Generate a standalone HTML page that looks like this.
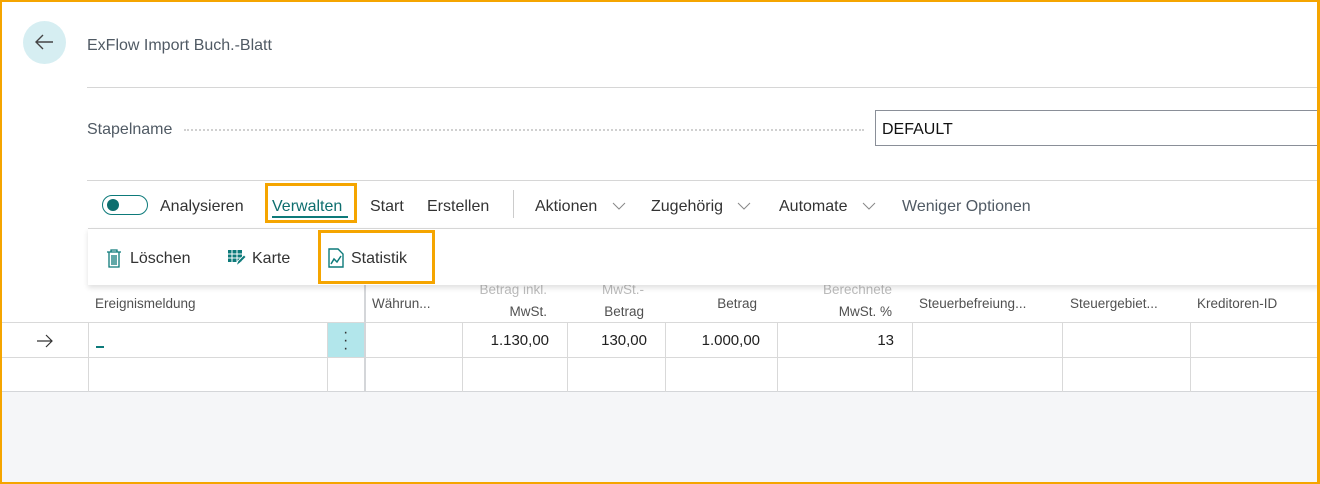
<!DOCTYPE html>
<html><head><meta charset="utf-8"><style>
*{margin:0;padding:0;box-sizing:border-box}
body{width:1320px;height:484px;overflow:hidden;background:#fff;font-family:"Liberation Sans",sans-serif;position:relative;color:#212121}
.a{position:absolute;white-space:nowrap}
.t{font-size:16px;color:#333}
.h{font-size:13.5px;color:#505050}
.v{font-size:15px;color:#212121}
.vl{position:absolute;width:1px;background:#d9d9d9}
.cv{position:absolute}
</style></head><body>
<div class="a" style="left:0;top:392px;width:1320px;height:92px;background:#f5f6f8"></div>
<div class="a" style="left:23px;top:21px;width:43px;height:43px;border-radius:50%;background:#d6eef2"></div>
<svg class="a" style="left:33px;top:32px" width="22" height="20" viewBox="0 0 22 20"><path d="M20 10H3M10 3L3 10l7 7" fill="none" stroke="#444" stroke-width="1.4"/></svg>
<div class="a" style="left:87px;top:37px;font-size:16px;color:#505a64">ExFlow Import Buch.-Blatt</div>
<div class="a" style="left:87px;top:87px;width:1233px;height:1px;background:#d6d6d6"></div>
<div class="a" style="left:87px;top:121px;font-size:16px;color:#505a64">Stapelname</div>
<div class="a" style="left:184px;top:129px;width:680px;border-top:2px dotted #d0d0d0"></div>
<div class="a" style="left:875px;top:110px;width:450px;height:36px;border:1px solid #8a8f98"></div>
<div class="a" style="left:882px;top:121px;font-size:16px;color:#111">DEFAULT</div>
<div class="a" style="left:87px;top:180px;width:1233px;height:1px;background:#d6d6d6"></div>
<!-- toolbar -->
<div class="a" style="left:102px;top:195px;width:46px;height:20px;border:1.5px solid #0d7a7a;border-radius:10px"></div>
<div class="a" style="left:107px;top:199px;width:12px;height:12px;border-radius:50%;background:#0d6e6e"></div>
<div class="a t" style="left:160px;top:198px">Analysieren</div>
<div class="a t" style="left:272px;top:198px;color:#0d6e6e">Verwalten</div>
<div class="a" style="left:272px;top:216px;width:76px;height:2px;background:#0d7a7a"></div>
<div class="a" style="left:265px;top:183px;width:92px;height:40px;border:3px solid #f5a500"></div>
<div class="a t" style="left:370px;top:198px">Start</div>
<div class="a t" style="left:427px;top:198px">Erstellen</div>
<div class="a" style="left:513px;top:190px;width:1px;height:28px;background:#ccc"></div>
<div class="a t" style="left:535px;top:198px">Aktionen</div>
<svg class="cv" style="left:612px;top:202px" width="14" height="8" viewBox="0 0 14 8"><path d="M1 1l6 6 6-6" fill="none" stroke="#888" stroke-width="1"/></svg>
<div class="a t" style="left:651px;top:198px">Zugehörig</div>
<svg class="cv" style="left:737px;top:202px" width="14" height="8" viewBox="0 0 14 8"><path d="M1 1l6 6 6-6" fill="none" stroke="#888" stroke-width="1"/></svg>
<div class="a t" style="left:779px;top:198px">Automate</div>
<svg class="cv" style="left:862px;top:202px" width="14" height="8" viewBox="0 0 14 8"><path d="M1 1l6 6 6-6" fill="none" stroke="#888" stroke-width="1"/></svg>
<div class="a t" style="left:902px;top:198px;color:#505a64">Weniger Optionen</div>
<!-- popup -->
<div class="a" style="left:88px;top:228px;width:1232px;height:57px;background:#fff;border-top:1px solid #d6d6d6;box-shadow:0 3px 5px rgba(0,0,0,0.12);z-index:2"></div>
<svg class="a" style="left:106px;top:249px;z-index:3" width="16" height="20" viewBox="0 0 16 20"><path d="M1 3h14M5 3V1h6v2M3 3v15h10V3M6 6v10M8 6v10M10 6v10" fill="none" stroke="#0d7a7a" stroke-width="1.3"/></svg>
<div class="a t" style="left:130px;top:250px;z-index:3">Löschen</div>
<svg class="a" style="left:227px;top:249px;z-index:3" width="20" height="19" viewBox="0 0 20 19"><rect x="1" y="1" width="14" height="12" fill="#0d7a7a"/><path d="M1 5h14M1 9h14M5 1v12M10 1v12" stroke="#fff" stroke-width="1"/><path d="M9 17l2-5 6-6 2 2-6 6z" fill="#0d7a7a" stroke="#fff" stroke-width="0.8"/></svg>
<div class="a t" style="left:252px;top:250px;z-index:3">Karte</div>
<svg class="a" style="left:328px;top:248px;z-index:3" width="16" height="20" viewBox="0 0 16 20"><path d="M1 1h9l5 5v13H1z" fill="none" stroke="#0d7a7a" stroke-width="1.4"/><path d="M3 16l3-5 3 3 4-6" fill="none" stroke="#0d7a7a" stroke-width="1.5"/></svg>
<div class="a t" style="left:351px;top:250px;z-index:3">Statistik</div>
<div class="a" style="left:318px;top:230px;width:117px;height:54px;border:3px solid #f5a500;z-index:4"></div>
<!-- table -->
<div class="a" style="left:2px;top:322px;width:1318px;height:1px;background:#d9d9d9"></div>
<div class="a" style="left:2px;top:357px;width:1318px;height:1px;background:#d9d9d9"></div>
<div class="a" style="left:2px;top:391px;width:1318px;height:1px;background:#d4d6d9"></div>
<div class="a" style="left:328px;top:323px;width:36px;height:34px;background:#b2e6eb"></div>
<div class="a" style="left:343px;top:329px;font-size:16px;color:#333;line-height:8px">·<br>·<br>·</div>
<div class="vl" style="left:88px;top:322px;height:70px"></div>
<div class="vl" style="left:327px;top:322px;height:70px"></div>
<div class="vl" style="left:364px;top:285px;height:107px;width:2px;background:#d4d6d9"></div>
<div class="vl" style="left:462px;top:322px;height:70px"></div>
<div class="vl" style="left:567px;top:322px;height:70px"></div>
<div class="vl" style="left:665px;top:322px;height:70px"></div>
<div class="vl" style="left:777px;top:322px;height:70px"></div>
<div class="vl" style="left:912px;top:322px;height:70px"></div>
<div class="vl" style="left:1062px;top:322px;height:70px"></div>
<div class="vl" style="left:1190px;top:322px;height:70px"></div>
<div class="a h" style="left:95px;top:296px">Ereignismeldung</div>
<div class="a h" style="left:372px;top:296px">Währun...</div>
<div class="a h" style="left:462px;top:279px;width:85px;text-align:right;line-height:22px;color:#bbb">Betrag inkl.<br><span style="color:#505050">MwSt.</span></div>
<div class="a h" style="left:567px;top:279px;width:77px;text-align:right;line-height:22px;color:#bbb">MwSt.-<br><span style="color:#505050">Betrag</span></div>
<div class="a h" style="left:665px;top:296px;width:92px;text-align:right">Betrag</div>
<div class="a h" style="left:777px;top:279px;width:115px;text-align:right;line-height:22px;color:#bbb">Berechnete<br><span style="color:#505050">MwSt. %</span></div>
<div class="a h" style="left:919px;top:296px">Steuerbefreiung...</div>
<div class="a h" style="left:1070px;top:296px">Steuergebiet...</div>
<div class="a h" style="left:1197px;top:296px">Kreditoren-ID</div>
<svg class="a" style="left:36px;top:334px" width="18" height="14" viewBox="0 0 18 14"><path d="M1 7h15M10 1l6 6-6 6" fill="none" stroke="#333" stroke-width="1.2"/></svg>
<div class="a" style="left:96px;top:346px;width:8px;height:2px;background:#0d7a7a"></div>
<div class="a v" style="left:462px;top:332px;width:87px;text-align:right">1.130,00</div>
<div class="a v" style="left:567px;top:332px;width:80px;text-align:right">130,00</div>
<div class="a v" style="left:665px;top:332px;width:95px;text-align:right">1.000,00</div>
<div class="a v" style="left:777px;top:332px;width:117px;text-align:right">13</div>
<div class="a" style="left:0;top:0;width:1320px;height:484px;border:2px solid #f5a500;border-right-width:3px;z-index:9"></div>
</body></html>
